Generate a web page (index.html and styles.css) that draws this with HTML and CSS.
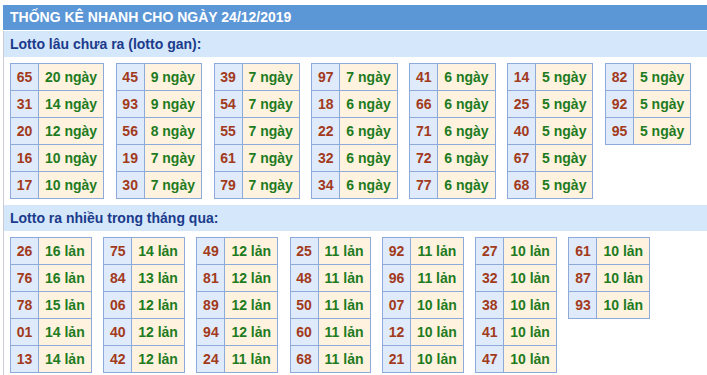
FILE: index.html
```html
<!DOCTYPE html>
<html lang="vi">
<head>
<meta charset="utf-8">
<title>Thống kê nhanh</title>
<link rel="stylesheet" href="styles.css">
</head>
<body>
<div class="box">
  <div class="title">THỐNG KÊ NHANH CHO NGÀY 24/12/2019</div>
  <div class="sub">Lotto lâu chưa ra (lotto gan):</div>
  <div class="tables">
    <table><tr><td class="n">65</td><td class="v">20 ngày</td></tr><tr><td class="n">31</td><td class="v">14 ngày</td></tr><tr><td class="n">20</td><td class="v">12 ngày</td></tr><tr><td class="n">16</td><td class="v">10 ngày</td></tr><tr><td class="n">17</td><td class="v">10 ngày</td></tr></table>
    <table><tr><td class="n">45</td><td class="v">9 ngày</td></tr><tr><td class="n">93</td><td class="v">9 ngày</td></tr><tr><td class="n">56</td><td class="v">8 ngày</td></tr><tr><td class="n">19</td><td class="v">7 ngày</td></tr><tr><td class="n">30</td><td class="v">7 ngày</td></tr></table>
    <table><tr><td class="n">39</td><td class="v">7 ngày</td></tr><tr><td class="n">54</td><td class="v">7 ngày</td></tr><tr><td class="n">55</td><td class="v">7 ngày</td></tr><tr><td class="n">61</td><td class="v">7 ngày</td></tr><tr><td class="n">79</td><td class="v">7 ngày</td></tr></table>
    <table><tr><td class="n">97</td><td class="v">7 ngày</td></tr><tr><td class="n">18</td><td class="v">6 ngày</td></tr><tr><td class="n">22</td><td class="v">6 ngày</td></tr><tr><td class="n">32</td><td class="v">6 ngày</td></tr><tr><td class="n">34</td><td class="v">6 ngày</td></tr></table>
    <table><tr><td class="n">41</td><td class="v">6 ngày</td></tr><tr><td class="n">66</td><td class="v">6 ngày</td></tr><tr><td class="n">71</td><td class="v">6 ngày</td></tr><tr><td class="n">72</td><td class="v">6 ngày</td></tr><tr><td class="n">77</td><td class="v">6 ngày</td></tr></table>
    <table><tr><td class="n">14</td><td class="v">5 ngày</td></tr><tr><td class="n">25</td><td class="v">5 ngày</td></tr><tr><td class="n">40</td><td class="v">5 ngày</td></tr><tr><td class="n">67</td><td class="v">5 ngày</td></tr><tr><td class="n">68</td><td class="v">5 ngày</td></tr></table>
    <table><tr><td class="n">82</td><td class="v">5 ngày</td></tr><tr><td class="n">92</td><td class="v">5 ngày</td></tr><tr><td class="n">95</td><td class="v">5 ngày</td></tr></table>
  </div>
  <div class="sub">Lotto ra nhiều trong tháng qua:</div>
  <div class="tables">
    <table><tr><td class="n">26</td><td class="v">16 lản</td></tr><tr><td class="n">76</td><td class="v">16 lản</td></tr><tr><td class="n">78</td><td class="v">15 lản</td></tr><tr><td class="n">01</td><td class="v">14 lản</td></tr><tr><td class="n">13</td><td class="v">14 lản</td></tr></table>
    <table><tr><td class="n">75</td><td class="v">14 lản</td></tr><tr><td class="n">84</td><td class="v">13 lản</td></tr><tr><td class="n">06</td><td class="v">12 lản</td></tr><tr><td class="n">40</td><td class="v">12 lản</td></tr><tr><td class="n">42</td><td class="v">12 lản</td></tr></table>
    <table><tr><td class="n">49</td><td class="v">12 lản</td></tr><tr><td class="n">81</td><td class="v">12 lản</td></tr><tr><td class="n">89</td><td class="v">12 lản</td></tr><tr><td class="n">94</td><td class="v">12 lản</td></tr><tr><td class="n">24</td><td class="v">11 lản</td></tr></table>
    <table><tr><td class="n">25</td><td class="v">11 lản</td></tr><tr><td class="n">48</td><td class="v">11 lản</td></tr><tr><td class="n">50</td><td class="v">11 lản</td></tr><tr><td class="n">60</td><td class="v">11 lản</td></tr><tr><td class="n">68</td><td class="v">11 lản</td></tr></table>
    <table><tr><td class="n">92</td><td class="v">11 lản</td></tr><tr><td class="n">96</td><td class="v">11 lản</td></tr><tr><td class="n">07</td><td class="v">10 lản</td></tr><tr><td class="n">12</td><td class="v">10 lản</td></tr><tr><td class="n">21</td><td class="v">10 lản</td></tr></table>
    <table><tr><td class="n">27</td><td class="v">10 lản</td></tr><tr><td class="n">32</td><td class="v">10 lản</td></tr><tr><td class="n">38</td><td class="v">10 lản</td></tr><tr><td class="n">41</td><td class="v">10 lản</td></tr><tr><td class="n">47</td><td class="v">10 lản</td></tr></table>
    <table><tr><td class="n">61</td><td class="v">10 lản</td></tr><tr><td class="n">87</td><td class="v">10 lản</td></tr><tr><td class="n">93</td><td class="v">10 lản</td></tr></table>
  </div>
</div>
</body>
</html>
```

FILE: styles.css
```css
html, body {
  margin: 0;
  padding: 0;
  background: #ffffff;
  overflow: hidden;
}
body {
  font-family: "Liberation Sans", Arial, sans-serif;
  font-size: 14px;
  font-weight: bold;
}
.box {
  margin: 5px 0 0 3px;
  width: 720px;
  min-height: 380px;
  border-left: 1px solid #c9ccd3;
}
.title {
  margin-left: -1px;
  height: 25px;
  line-height: 24px;
  padding-left: 7px;
  background: #5b96d6;
  color: #ffffff;
  border-bottom: 1px solid #ffffff;
}
.sub {
  height: 26px;
  line-height: 26px;
  padding-left: 6px;
  background: #d5e7fa;
  color: #1b3b8c;
}
.tables {
  display: flex;
  align-items: flex-start;
  gap: 11.5px;
  padding: 6px 0 6px 6px;
}
table {
  border-collapse: separate;
  border-spacing: 0;
  border-top: 1px solid #8eaadb;
  border-left: 1px solid #8eaadb;
}
td {
  height: 26px;
  padding: 0;
  border-right: 1px solid #8eaadb;
  border-bottom: 1px solid #8eaadb;
  text-align: center;
  white-space: nowrap;
}
td.n {
  width: 27px;
  background: #dfeafb;
  color: #a23a1c;
}
td.v {
  padding: 0 6px;
  background: #fff3e0;
  color: #1e7b1e;
}
```
